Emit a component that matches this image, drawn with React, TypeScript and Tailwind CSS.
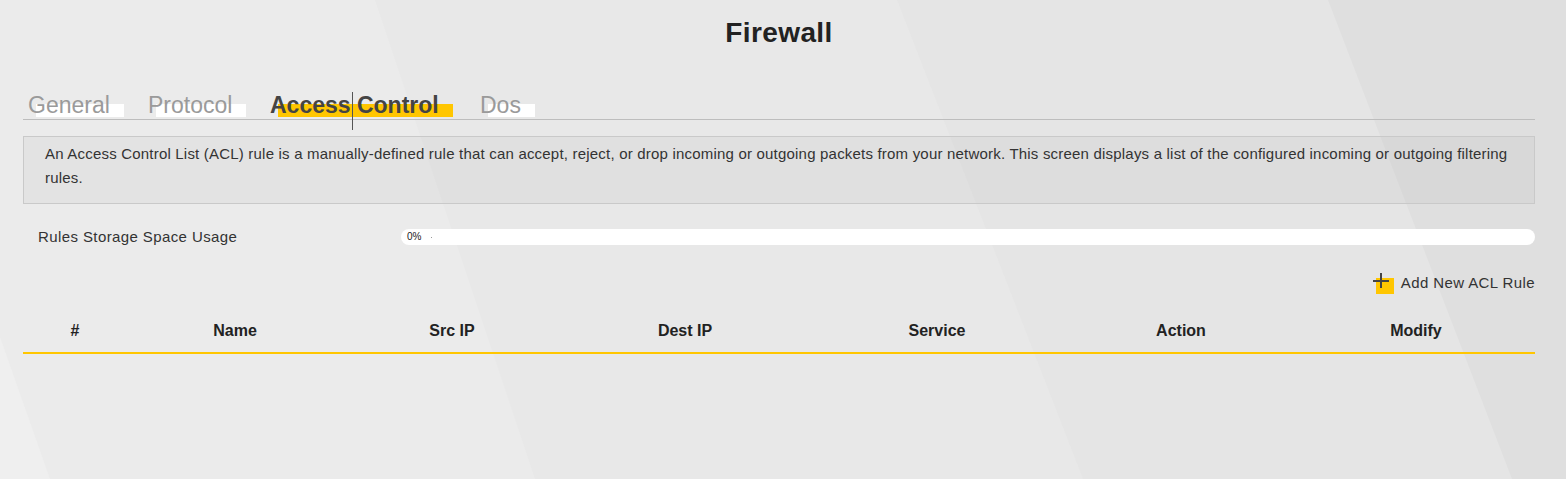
const font = { fontFamily: '"Liberation Sans", Arial, sans-serif' }

const tabs = [
  { label: 'General', active: false, width: 'w-[120px]' },
  { label: 'Protocol', active: false, width: 'w-[122px]' },
  { label: 'Access Control', active: true, width: 'w-[210px]' },
  { label: 'Dos', active: false, width: 'w-[70px]' },
]

const columns = ['#', 'Name', 'Src IP', 'Dest IP', 'Service', 'Action', 'Modify']

function Background() {
  return (
    <svg className="absolute inset-0" width="1566" height="479" viewBox="0 0 1566 479">
      <rect width="1566" height="479" fill="#ebebeb" />
      <polygon points="375,0 1566,0 1566,479 535,479" fill="#e8e8e8" />
      <polygon points="897,0 1566,0 1566,479 1083,479" fill="#e5e5e5" />
      <polygon points="1328,0 1566,0 1566,479 1512,479" fill="#dfdfdf" />
      <polygon points="0,337 50,479 0,479" fill="#efefef" />
    </svg>
  )
}

export default function App() {
  return (
    <div className="relative w-[1566px] h-[479px] overflow-hidden" style={font}>
      <Background />
      <div className="relative ml-[23px] w-[1512px]">
        {/* Title */}
        <h1 className="pt-[17px] text-center text-[28px] leading-[32px] font-bold tracking-[0.4px] text-[#222]">
          Firewall
        </h1>

        {/* Tabs */}
        <div className="mt-[42px] flex h-[29px] items-start border-b border-[#bdbdbd] pl-[5px]">
          {tabs.map((t) => (
            <div key={t.label} className={`${t.width} text-[23px] leading-[28px]`}>
              <span className="relative inline-block">
                <span
                  className={`absolute left-[8px] -right-[14px] top-[13px] h-[13px] ${
                    t.active ? 'bg-[#ffc600]' : 'bg-white'
                  }`}
                />
                <span className={`relative ${t.active ? 'font-bold text-[#444]' : 'text-[#9a9a9a]'}`}>{t.label}</span>
              </span>
            </div>
          ))}
          <span className="absolute left-[329px] top-[92px] h-[38px] w-px bg-[#555]" />
        </div>

        {/* Description */}
        <div className="mt-[16px] border border-[#c9c9c9] bg-black/[0.03] px-[21px] pt-[5px] pb-[13px] text-[15px] leading-[24px] tracking-[0.2px] text-[#333]">
          An Access Control List (ACL) rule is a manually-defined rule that can accept, reject, or drop incoming or
          outgoing packets from your network. This screen displays a list of the configured incoming or outgoing
          filtering rules.
        </div>

        {/* Storage usage */}
        <div className="mt-[22px] flex items-center">
          <div className="w-[378px] pl-[15px] text-[15px] tracking-[0.4px] text-[#333]">Rules Storage Space Usage</div>
          <div className="flex h-[16px] flex-1 items-center rounded-full bg-white pl-[6px]">
            <span className="text-[10px] leading-none text-[#222]">0%</span>
            <span className="ml-[10px] h-px w-px bg-[#999]" />
          </div>
        </div>

        {/* Add rule */}
        <div className="mt-[24px] flex justify-end">
          <button className="flex items-center gap-[7px] text-[15px] leading-[20px] tracking-[0.4px] text-[#333]">
            <span className="relative h-[21px] w-[21px]">
              <span className="absolute left-[3px] top-[5px] h-[16px] w-[18px] bg-[#ffc600]" />
              <svg className="absolute left-0 top-0" width="18" height="18" viewBox="0 0 18 18">
                <path d="M0 8h16M8 0v15" stroke="#444" strokeWidth="2" />
              </svg>
            </span>
            Add New ACL Rule
          </button>
        </div>

        {/* Table header */}
        <div className="mt-[27px] grid grid-cols-[104px_216px_218px_248px_256px_232px_238px] border-b-2 border-[#ffc600] pb-[11px]">
          {columns.map((c) => (
            <div key={c} className="text-center text-[16px] font-bold leading-[20px] text-[#222]">
              {c}
            </div>
          ))}
        </div>
      </div>
    </div>
  )
}
